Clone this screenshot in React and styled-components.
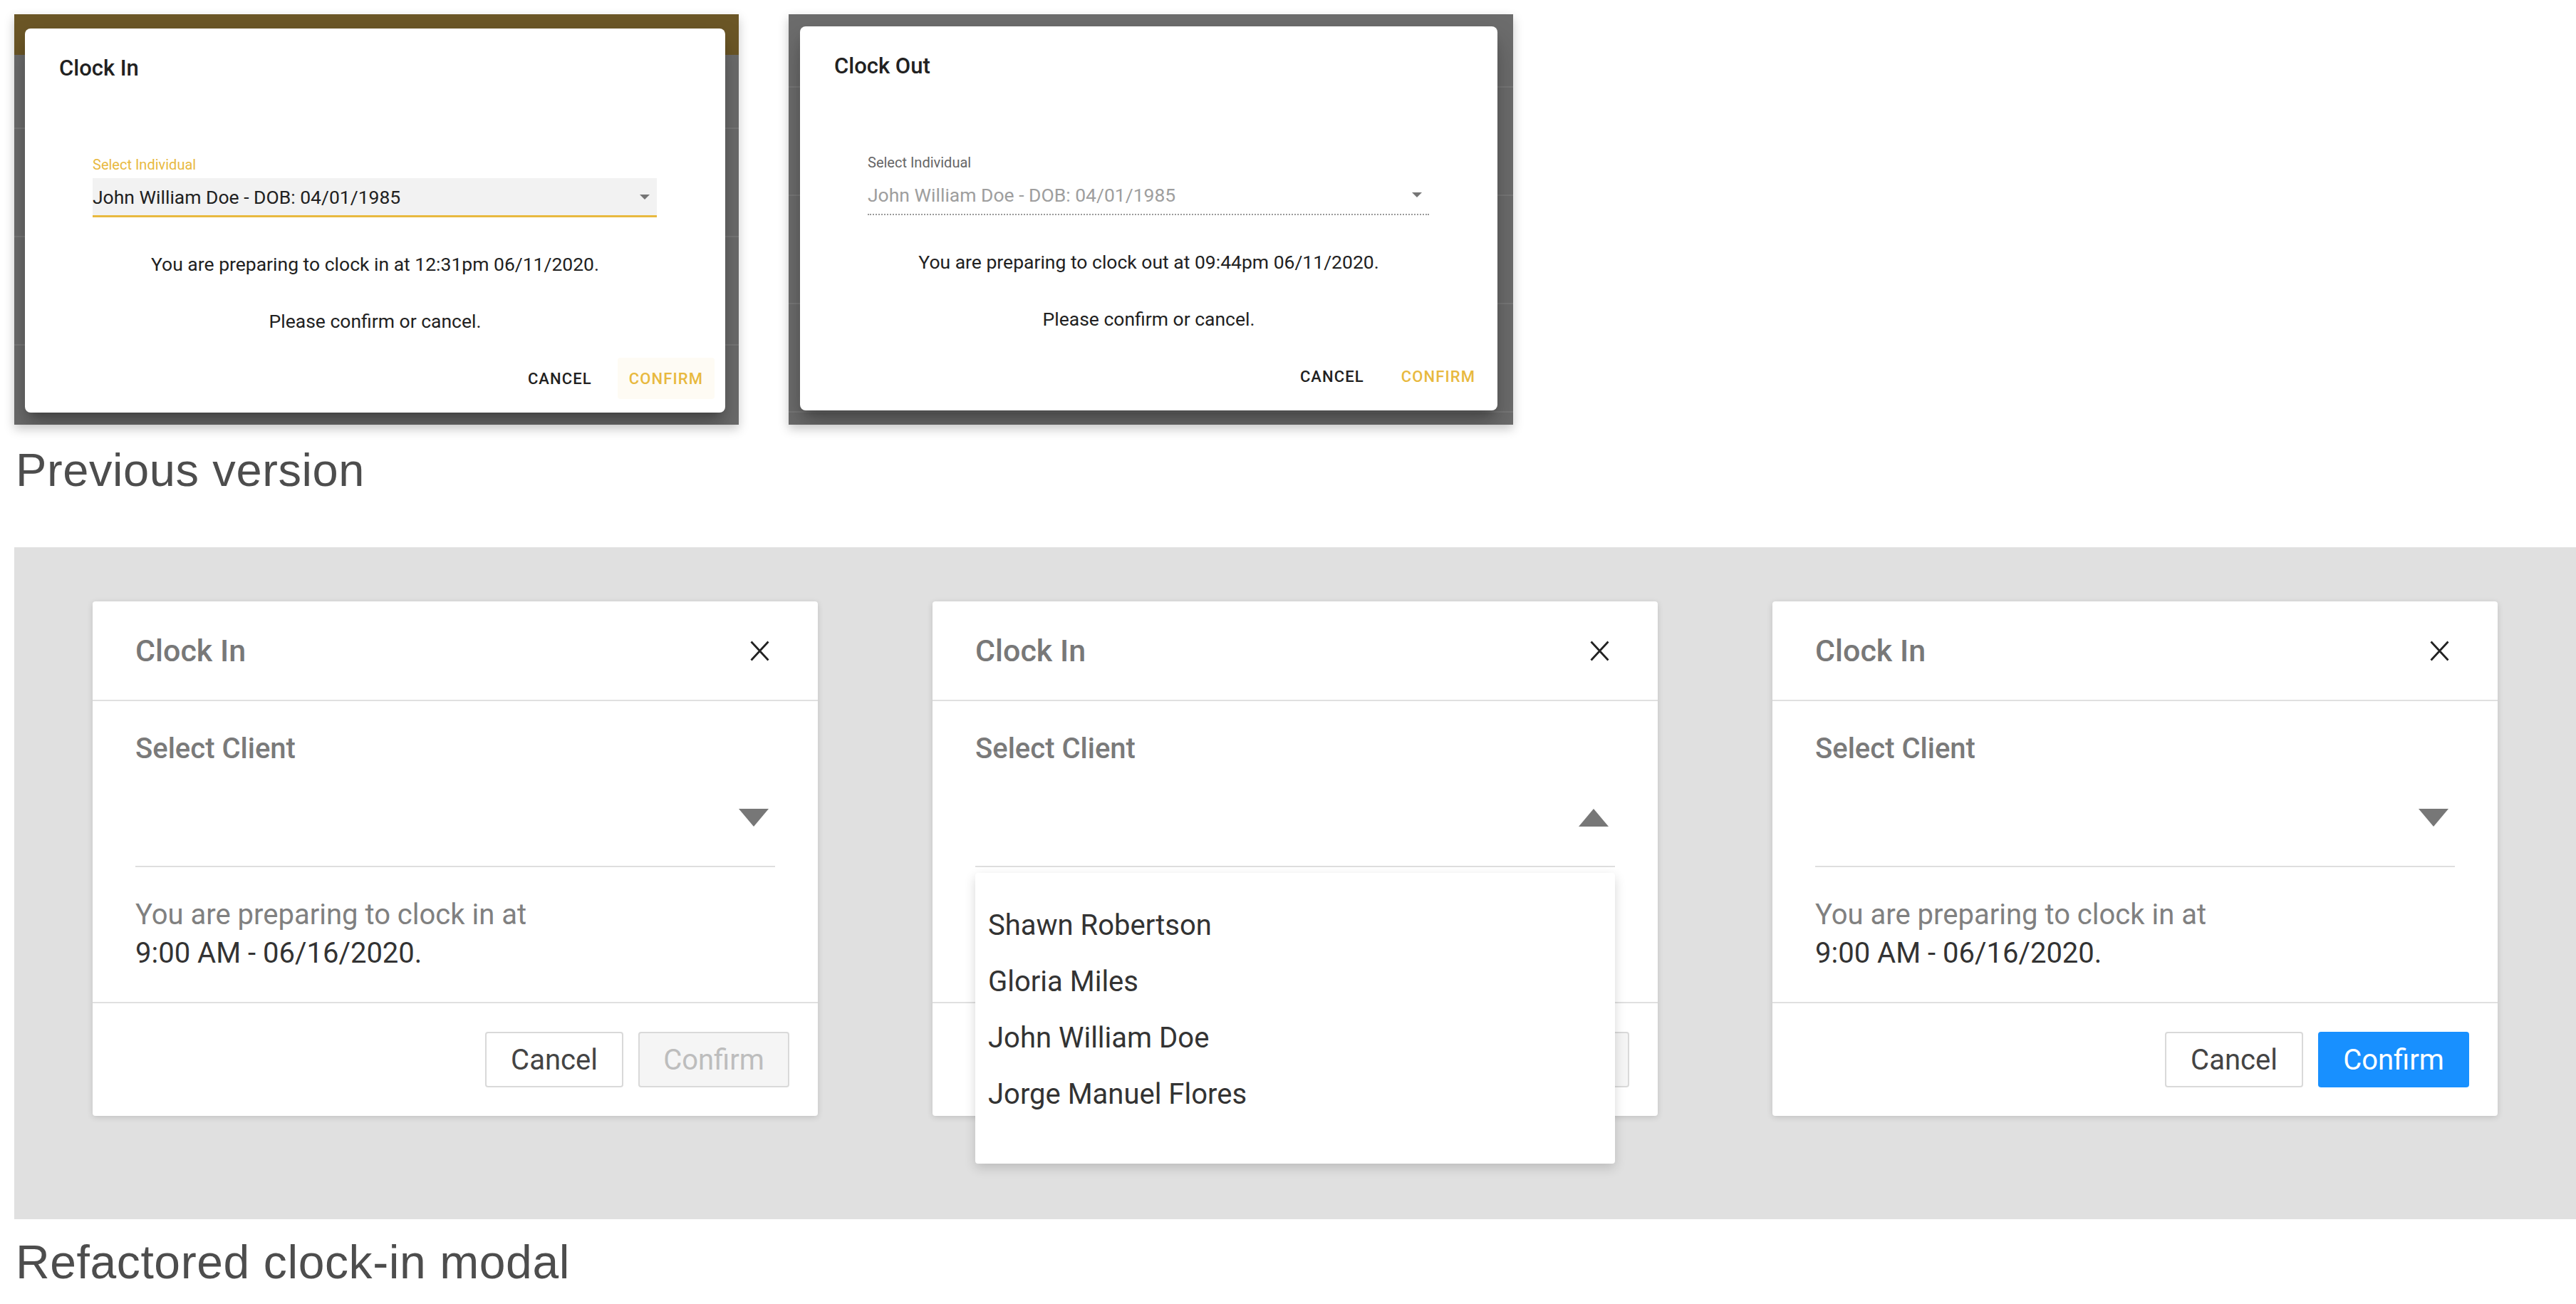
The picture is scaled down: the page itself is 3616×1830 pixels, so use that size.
import React from 'react';
import styled, { createGlobalStyle } from 'styled-components';

const GOLD = '#e8b93f';

const GlobalStyle = createGlobalStyle`
    html, body {
        margin: 0;
        padding: 0;
        background: #fff;
    }
    body {
        font-family: Roboto, "Liberation Sans", sans-serif;
    }
    * {
        box-sizing: border-box;
    }
`;

const Page = styled.div`
    width: 3616px;
    height: 1830px;
    padding-top: 20px;
    overflow: hidden;
`;

const ShotRow = styled.div`
    display: flex;
    gap: 70px;
    padding-left: 20px;
`;

const Backdrop = styled.div`
    width: 1017px;
    height: 576px;
    display: flex;
    overflow: hidden;
    padding: ${props => props.$pad};
    background:
        ${props => (props.$gold ? 'linear-gradient(#6b5626, #6b5626) 0 0 / 100% 57px no-repeat,' : '')}
        repeating-linear-gradient(to bottom, #787878 0 2px, transparent 2px 152px) 0 ${props => props.$lines}px / 100% 152px,
        #6c6c6c;
    box-shadow: 0 6px 14px rgba(0, 0, 0, 0.22);
`;

const OldDialog = styled.div`
    flex: 1;
    display: flex;
    flex-direction: column;
    background: #fff;
    border-radius: 8px;
    color: #212121;
    box-shadow: 0 11px 15px -7px rgba(0, 0, 0, 0.3), 0 24px 38px 3px rgba(0, 0, 0, 0.2);
`;

const OldTitle = styled.div`
    margin: 36px 0 0 48px;
    font-size: 31px;
    line-height: 40px;
    font-weight: 500;
`;

const OldField = styled.div`
    margin: 103px 96px 0 95px;
`;

const OldLabel = styled.div`
    font-size: 20px;
    line-height: 24px;
    color: ${props => props.$color};
`;

const OldSelect = styled.div`
    margin-top: 7px;
    height: 55px;
    display: flex;
    align-items: center;
    justify-content: space-between;
    padding-right: 10px;
    font-size: 26.5px;
    color: ${props => props.$color};
    background: ${props => (props.$active ? '#f2f2f2' : 'transparent')};
    border-bottom: ${props => (props.$active ? `3px solid ${GOLD}` : '2px dotted #9a9a9a')};
`;

const OldMessage = styled.p`
    margin: ${props => props.$gap}px 0 0;
    text-align: center;
    font-size: 26.5px;
    line-height: 36px;
`;

const OldActions = styled.div`
    display: flex;
    justify-content: flex-end;
    gap: 20px;
    margin-top: 33px;
    padding-right: 15px;
`;

const OldButton = styled.div`
    height: 58px;
    display: flex;
    align-items: center;
    padding: 0 16px;
    border-radius: 4px;
    font-size: 22px;
    font-weight: 500;
    letter-spacing: 0.05em;
    color: ${props => (props.$gold ? GOLD : '#212121')};
    background: ${props => (props.$tint ? '#fefbf4' : 'transparent')};
`;

const Caption = styled.h2`
    margin: ${props => props.$top}px 0 0;
    padding-left: 22px;
    font-family: "Liberation Sans", Arial, sans-serif;
    font-weight: 400;
    font-size: ${props => props.$size}px;
    letter-spacing: 0.6px;
    line-height: 1;
    color: #4d4d4d;
`;

const Band = styled.section`
    margin: 76px 0 0 20px;
    height: 943px;
    background: #e0e0e0;
    padding: 76px 0 0 110px;
    display: flex;
    align-items: flex-start;
    gap: 161px;
`;

const Modal = styled.div`
    position: relative;
    width: 1018px;
    background: #fff;
    border-radius: 4px;
    box-shadow: 0 2px 9px rgba(0, 0, 0, 0.14);
`;

const ModalHeader = styled.div`
    height: 140px;
    display: flex;
    align-items: center;
    justify-content: space-between;
    padding: 0 68px 0 60px;
    border-bottom: 2px solid #e0e0e0;
`;

const ModalTitle = styled.div`
    font-size: 43px;
    font-weight: 500;
    line-height: 1;
    color: #787878;
`;

const ModalBody = styled.div`
    padding: 43px 60px 41px;
    border-bottom: 2px solid #e0e0e0;
`;

const FieldLabel = styled.div`
    font-size: 40px;
    line-height: 48px;
    font-weight: 500;
    color: #7a7a7a;
`;

const SelectField = styled.div`
    position: relative;
    height: 142px;
    display: flex;
    align-items: center;
    justify-content: flex-end;
    padding: 4px 9px 0 0;
    border-bottom: 2px solid #dedede;
`;

const Dropdown = styled.ul`
    position: absolute;
    top: calc(100% + 10px);
    left: 0;
    right: 0;
    z-index: 2;
    margin: 0;
    padding: 34px 0 58px 18px;
    list-style: none;
    background: #fff;
    border-radius: 4px;
    box-shadow: 0 6px 16px rgba(0, 0, 0, 0.16);
`;

const DropdownItem = styled.li`
    font-size: 40px;
    line-height: 79px;
    color: #333;
`;

const Message = styled.div`
    margin-top: 40px;
    font-size: 40px;
    line-height: 54px;
`;

const MessageLine = styled.div`
    color: ${props => (props.$muted ? '#808080' : '#333')};
`;

const ModalFooter = styled.div`
    display: flex;
    justify-content: flex-end;
    gap: 21px;
    padding: 40px;
`;

const BUTTON_VARIANTS = {
    default: { bg: '#fff', border: '#d9d9d9', color: '#444' },
    disabled: { bg: '#f5f5f5', border: '#d9d9d9', color: '#bdbdbd' },
    primary: { bg: '#1890ff', border: '#1890ff', color: '#fff' },
};

const ModalButton = styled.div`
    height: 78px;
    display: flex;
    align-items: center;
    justify-content: center;
    min-width: ${props => props.$width}px;
    border-radius: 4px;
    font-size: 40px;
    background: ${props => BUTTON_VARIANTS[props.$variant].bg};
    border: 2px solid ${props => BUTTON_VARIANTS[props.$variant].border};
    color: ${props => BUTTON_VARIANTS[props.$variant].color};
`;

const CloseIcon = () => (
    <svg width="27" height="29" viewBox="0 0 27 29">
        <path d="M1.5 1.5 L25.5 27.5 M25.5 1.5 L1.5 27.5" stroke="#222" strokeWidth="2.8" fill="none" />
    </svg>
);

const Caret = ({ up }) => (
    <svg width="42" height="25" viewBox="0 0 42 25">
        <polygon points={up ? '0,25 42,25 21,0' : '0,0 42,0 21,25'} fill="#777" />
    </svg>
);

const SmallCaret = () => (
    <svg width="14" height="7" viewBox="0 0 14 7">
        <polygon points="0,0 14,0 7,7" fill="#757575" />
    </svg>
);

const OLD_SHOTS = [
    {
        key: 'in',
        title: 'Clock In',
        pad: '20px 19px 17px 15px',
        gold: true,
        lines: 159,
        active: true,
        message: 'You are preparing to clock in at 12:31pm 06/11/2020.',
    },
    {
        key: 'out',
        title: 'Clock Out',
        pad: '17px 22px 20px 16px',
        gold: false,
        lines: 101,
        active: false,
        message: 'You are preparing to clock out at 09:44pm 06/11/2020.',
    },
];

const CLIENTS = ['Shawn Robertson', 'Gloria Miles', 'John William Doe', 'Jorge Manuel Flores'];

const MODALS = [
    { key: 'empty', open: false, confirm: 'disabled' },
    { key: 'open', open: true, confirm: 'disabled' },
    { key: 'ready', open: false, confirm: 'primary' },
];

const OldShot = ({ shot }) => (
    <Backdrop $pad={shot.pad} $gold={shot.gold} $lines={shot.lines}>
        <OldDialog>
            <OldTitle>{shot.title}</OldTitle>
            <OldField>
                <OldLabel $color={shot.active ? GOLD : '#666'}>Select Individual</OldLabel>
                <OldSelect $active={shot.active} $color={shot.active ? '#212121' : '#9e9e9e'}>
                    John William Doe - DOB: 04/01/1985
                    <SmallCaret />
                </OldSelect>
            </OldField>
            <OldMessage $gap={48}>{shot.message}</OldMessage>
            <OldMessage $gap={44}>Please confirm or cancel.</OldMessage>
            <OldActions>
                <OldButton>CANCEL</OldButton>
                <OldButton $gold $tint={shot.active}>CONFIRM</OldButton>
            </OldActions>
        </OldDialog>
    </Backdrop>
);

const ClockInModal = ({ modal }) => (
    <Modal>
        <ModalHeader>
            <ModalTitle>Clock In</ModalTitle>
            <CloseIcon />
        </ModalHeader>
        <ModalBody>
            <FieldLabel>Select Client</FieldLabel>
            <SelectField>
                <Caret up={modal.open} />
                {modal.open && (
                    <Dropdown>
                        {CLIENTS.map(name => (
                            <DropdownItem key={name}>{name}</DropdownItem>
                        ))}
                    </Dropdown>
                )}
            </SelectField>
            <Message>
                <MessageLine $muted>You are preparing to clock in at</MessageLine>
                <MessageLine>9:00 AM - 06/16/2020.</MessageLine>
            </Message>
        </ModalBody>
        <ModalFooter>
            <ModalButton $variant="default" $width={194}>Cancel</ModalButton>
            <ModalButton $variant={modal.confirm} $width={212}>Confirm</ModalButton>
        </ModalFooter>
    </Modal>
);

const App = () => (
    <Page>
        <GlobalStyle />
        <ShotRow>
            {OLD_SHOTS.map(shot => <OldShot key={shot.key} shot={shot} />)}
        </ShotRow>
        <Caption $top={31} $size={65}>Previous version</Caption>
        <Band>
            {MODALS.map(modal => <ClockInModal key={modal.key} modal={modal} />)}
        </Band>
        <Caption $top={27} $size={66}>Refactored clock-in modal</Caption>
    </Page>
);

export default App;
